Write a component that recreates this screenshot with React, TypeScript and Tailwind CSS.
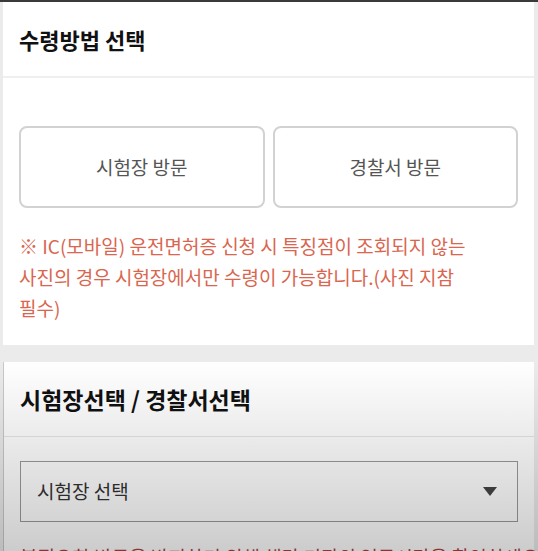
import React from "react";

const font = { fontFamily: '"Noto Sans CJK KR", "Noto Sans", sans-serif' };

const MethodButton = ({ label }: { label: string }) => (
  <button className="h-[82px] rounded-lg border-2 border-[#d2d2d2] bg-white text-[19px] text-[#555]">
    {label}
  </button>
);

const App = () => {
  return (
    <div
      className="relative h-[551px] w-[538px] overflow-hidden border-t-2 border-[#3a3a3a] bg-[#ebebeb]"
      style={font}
    >
      <div className="ml-[3px] mr-[4px]">
        {/* 수령방법 */}
        <section className="bg-white">
          <div className="flex h-[74px] items-center px-4">
            <h2 className="text-[22px] font-bold text-[#111]">수령방법 선택</h2>
          </div>
          <div className="h-[2px] bg-[#efefef]" />
          <div className="px-4 pt-[48px] pb-[22px]">
            <div className="grid grid-cols-2 gap-2">
              <MethodButton label="시험장 방문" />
              <MethodButton label="경찰서 방문" />
            </div>
            <p className="mt-[22px] text-[19px] leading-[31px] whitespace-nowrap text-[#d9664f]">
              ※ IC(모바일) 운전면허증 신청 시 특징점이 조회되지 않는
              <br />
              사진의 경우 시험장에서만 수령이 가능합니다.(사진 지참
              <br />
              필수)
            </p>
          </div>
        </section>

        {/* 시험장 / 경찰서 */}
        <section className="mt-[17px] border-l border-[#c8c8c8] bg-white">
          <div className="flex h-[74px] items-center px-4">
            <h2 className="text-[23px] font-bold text-[#111]">
              시험장선택 / 경찰서선택
            </h2>
          </div>
          <div className="h-[1px] bg-[#e6e6e6]" />
          <div className="px-4 pt-[24px]">
            <div className="flex h-[61px] items-center justify-between border border-[#9a9a9a] pr-5 pl-4">
              <span className="text-[19px] text-[#333]">시험장 선택</span>
              <svg width="14" height="9" viewBox="0 0 14 9">
                <path d="M0 0h14L7 9z" fill="#444" />
              </svg>
            </div>
            <p className="mt-[19px] text-[19px] leading-[31px] whitespace-nowrap text-[#a8443a]">
              불필요한 방문을 방지하기 위해 해당 기관의 업무시간을 확인하세요
            </p>
          </div>
        </section>
      </div>

      <div className="pointer-events-none absolute inset-x-0 bottom-0 h-[190px] bg-gradient-to-b from-transparent to-black/20" />
    </div>
  );
};

export default App;
